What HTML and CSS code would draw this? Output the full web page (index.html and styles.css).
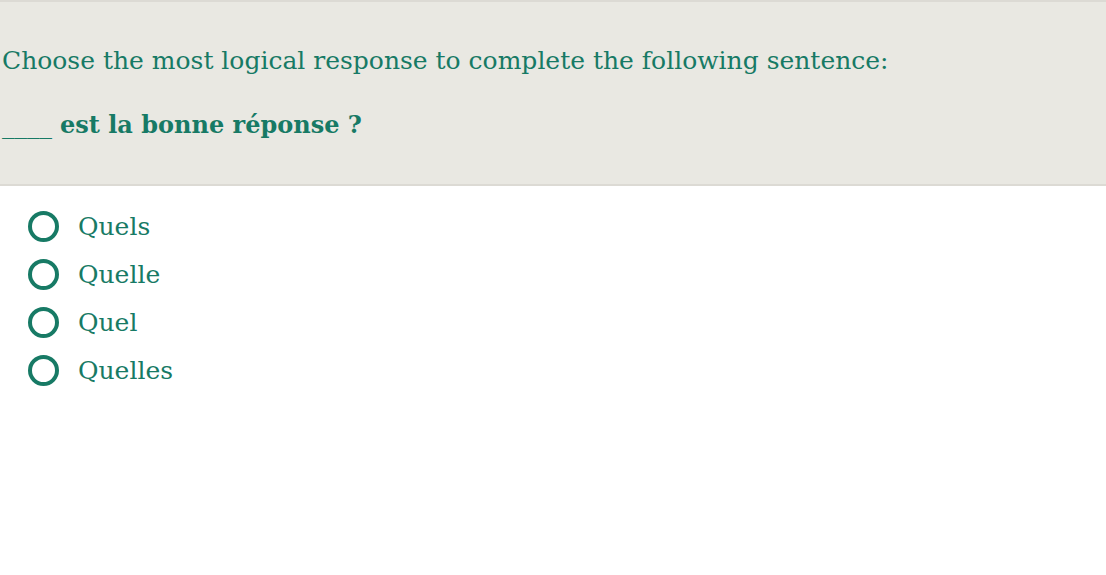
FILE: index.html
```html
<!DOCTYPE html>
<html lang="en">
<head>
<meta charset="utf-8">
<link rel="stylesheet" href="styles.css">
</head>
<body>
<div class="question">
  <p class="prompt">Choose the most logical response to complete the following sentence:</p>
  <p class="sentence"><span class="blank">____</span> <strong>est la bonne réponse ?</strong></p>
</div>
<ul class="options">
  <li class="option"><span class="radio"></span><span class="label">Quels</span></li>
  <li class="option"><span class="radio"></span><span class="label">Quelle</span></li>
  <li class="option"><span class="radio"></span><span class="label">Quel</span></li>
  <li class="option"><span class="radio"></span><span class="label">Quelles</span></li>
</ul>
</body>
</html>
```
FILE: styles.css
```css
html, body {
  margin: 0;
  padding: 0;
  background: #ffffff;
}
body {
  font-family: "DejaVu Serif", "Liberation Serif", serif;
  color: #177a65;
  width: 1106px;
  height: 575px;
  overflow: hidden;
}
.question {
  background: #e9e8e2;
  border-top: 2px solid #dcdad4;
  border-bottom: 2px solid #dcdad4;
  box-sizing: border-box;
  height: 186px;
  padding: 0 0 0 2px;
}
.prompt {
  margin: 0;
  padding-top: 39px;
  font-size: 25px;
  line-height: 40px;
}
.sentence {
  margin: 0;
  padding-top: 24px;
  font-size: 25px;
  line-height: 40px;
}
.sentence strong {
  font-size: 24px;
  font-weight: bold;
}
.options {
  list-style: none;
  margin: 0;
  padding: 16px 0 0 28px;
}
.option {
  display: flex;
  align-items: center;
  height: 48px;
  gap: 19px;
}
.radio {
  width: 31px;
  height: 31px;
  box-sizing: border-box;
  border: 4px solid #177a65;
  border-radius: 50%;
  flex: none;
}
.label {
  font-size: 25px;
}
```
